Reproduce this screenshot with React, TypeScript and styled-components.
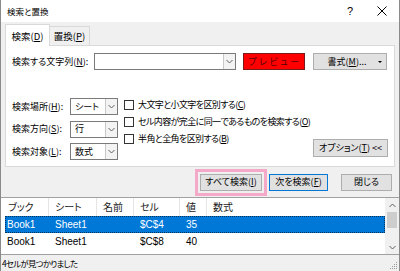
import React from "react";
import styled, { createGlobalStyle } from "styled-components";

const Global = createGlobalStyle`
  html, body { margin: 0; padding: 0; background: #fff; }
  body {
    font-family: "Noto Sans CJK JP", "Noto Sans", sans-serif;
    font-size: 9px;
    font-feature-settings: "palt";
    color: #000;
  }
  * { box-sizing: border-box; }
`;

const Window = styled.div`
  width: 400px;
  height: 271px;
  display: flex;
  flex-direction: column;
  background: #f0f0f0;
  border-left: 1px solid #8a8a8a;
  border-right: 1px solid #8a8a8a;
  overflow: hidden;
`;

const TitleBar = styled.div`
  height: 22px;
  flex: none;
  background: #fff;
  display: flex;
  align-items: center;
  padding-left: 6px;
`;

const Title = styled.span`
  font-size: 8.5px;
  line-height: 12px;
  flex: 1;
`;

const HelpMark = styled.span`
  width: 30px;
  text-align: center;
  font-family: "Liberation Sans", sans-serif;
  font-size: 11px;
  margin-right: 0px;
`;

const CloseBox = styled.span`
  width: 34px;
  height: 22px;
  display: flex;
  align-items: center;
  justify-content: center;
`;

const TabStrip = styled.div`
  height: 23px;
  flex: none;
  display: flex;
  align-items: flex-end;
  padding-left: 4px;
`;

const Tab = styled.div<{ $active?: boolean }>`
  height: ${(p) => (p.$active ? 22 : 19)}px;
  width: ${(p) => (p.$active ? 45 : 40)}px;
  background: ${(p) => (p.$active ? "#fff" : "#f0f0f0")};
  border: 1px solid #d9d9d9;
  border-bottom: none;
  ${(p) => (p.$active ? "" : "border-left: none;")}
  margin-bottom: ${(p) => (p.$active ? -1 : 0)}px;
  position: relative;
  z-index: ${(p) => (p.$active ? 1 : 0)};
  display: flex;
  align-items: center;
  justify-content: center;
  font-size: 9.5px;
  line-height: 12px;
`;

const Panel = styled.div`
  height: 122px;
  flex: none;
  margin: 0 4px;
  background: #fff;
  border: 1px solid #d9d9d9;
  padding: 7px 6px 0 6px;
`;

const FindRow = styled.div`
  display: flex;
  align-items: center;
  height: 17px;
`;

const Label = styled.span<{ $w: number }>`
  width: ${(p) => p.$w}px;
  flex: none;
  white-space: nowrap;
  line-height: 12px;
`;

const Combo = styled.div<{ $w: number }>`
  width: ${(p) => p.$w}px;
  height: 17px;
  flex: none;
  border: 1px solid #7a7a7a;
  background: #fff;
  display: flex;
  align-items: center;
`;

const ComboText = styled.span`
  flex: 1;
  padding-left: 4px;
  line-height: 12px;
  white-space: nowrap;
`;

const ComboArrow = styled.span`
  width: 12px;
  height: 100%;
  border-left: 1px solid #c8c8c8;
  background: #f3f3f3;
  display: flex;
  align-items: center;
  justify-content: center;
`;

const Preview = styled.div`
  width: 62px;
  height: 17px;
  flex: none;
  margin-left: 7px;
  background: #ff0000;
  border: 1px solid #7a1a1a;
  display: flex;
  align-items: center;
  justify-content: center;
  color: #5a0000;
  letter-spacing: 2.5px;
  padding-left: 2px;
  line-height: 12px;
  white-space: nowrap;
  overflow: hidden;
`;

const Button = styled.div<{ $w: number; $default?: boolean }>`
  width: ${(p) => p.$w}px;
  height: 17px;
  flex: none;
  background: #e1e1e1;
  border: 1px solid ${(p) => (p.$default ? "#0078d7" : "#adadad")};
  display: flex;
  align-items: center;
  justify-content: center;
  line-height: 12px;
  white-space: nowrap;
  position: relative;
`;

const FormatButton = styled(Button)`
  margin-left: 8px;
  padding-right: 6px;
`;

const MenuCaret = styled.span`
  position: absolute;
  right: 4px;
  top: 7px;
  width: 0;
  height: 0;
  border-left: 2px solid transparent;
  border-right: 2px solid transparent;
  border-top: 2px solid #000;
`;

const OptionsArea = styled.div`
  display: flex;
  margin-top: 26px;
`;

const ScopeGrid = styled.div`
  display: grid;
  grid-template-columns: 58px 48px;
  grid-auto-rows: 17px;
  row-gap: 5.5px;
  margin-top: 2px;
  align-items: center;
  flex: none;
`;

const CheckCol = styled.div`
  display: flex;
  flex-direction: column;
  margin-left: 6px;
  flex: 1;
  min-width: 0;
`;

const CheckRow = styled.div`
  height: 17px;
  display: flex;
  align-items: center;
  white-space: nowrap;
  line-height: 12px;
  letter-spacing: -0.6px;
`;

const CheckBox = styled.span`
  width: 10px;
  height: 10px;
  border: 1px solid #333;
  background: #fff;
  margin-right: 4px;
  flex: none;
`;

const OptionsButton = styled(Button)`
  height: 18px;
  margin-top: 43px;
`;

const ButtonRow = styled.div`
  height: 30px;
  flex: none;
  display: flex;
  align-items: center;
  justify-content: flex-end;
  padding-right: 7px;
`;

const Highlight = styled.div`
  border: 3px solid #f4a9c9;
  padding: 2px;
  margin-right: 2px;
`;

const Gap = styled.span<{ $w: number }>`
  width: ${(p) => p.$w}px;
  flex: none;
`;

const List = styled.div`
  height: 58px;
  flex: none;
  display: flex;
  background: #fff;
  border-top: 1px solid #a0a0a0;
  border-bottom: 1px solid #a0a0a0;
`;

const ListBody = styled.div`
  flex: 1;
  display: flex;
  flex-direction: column;
`;

const Header = styled.div`
  height: 18px;
  display: grid;
  grid-template-columns: 48px 48px 37px 46px 27px 1fr;
  font-size: 10px;
  color: #1a1a1a;
`;

const HeadCell = styled.div<{ $pad: number }>`
  display: flex;
  align-items: center;
  padding-left: ${(p) => p.$pad}px;
  border-right: 1px solid #e5e5e5;
  line-height: 12px;
  &:last-child { border-right: none; }
`;

const Row = styled.div<{ $sel?: boolean }>`
  height: 17px;
  margin-left: 4px;
  display: grid;
  grid-template-columns: 44px 48px 37px 46px 27px 1fr;
  font-size: 10px;
  background: ${(p) => (p.$sel ? "#0078d7" : "transparent")};
  color: ${(p) => (p.$sel ? "#fff" : "#000")};
  outline: ${(p) => (p.$sel ? "1px dotted rgba(0,0,0,0.55)" : "none")};
  outline-offset: -1px;
`;

const Cell = styled.div<{ $pad: number }>`
  display: flex;
  align-items: center;
  padding-left: ${(p) => p.$pad}px;
  line-height: 12px;
  font-family: "Liberation Sans", "Noto Sans CJK JP", sans-serif;
  white-space: nowrap;
`;

const ScrollBar = styled.div`
  width: 14px;
  flex: none;
  background: #f0f0f0;
  display: flex;
  flex-direction: column;
  align-items: center;
`;

const ScrollArrow = styled.div`
  height: 14px;
  width: 14px;
  display: flex;
  align-items: center;
  justify-content: center;
`;

const Thumb = styled.div`
  width: 10px;
  height: 16px;
  background: #cdcdcd;
`;

const ScrollSpace = styled.div`
  flex: 1;
`;

const StatusBar = styled.div`
  flex: 1;
  display: flex;
  align-items: center;
  padding-left: 1px;
  position: relative;
  line-height: 12px;
  font-size: 8.5px;
  letter-spacing: -0.8px;
`;

const Grip = styled.svg`
  position: absolute;
  right: 1px;
  bottom: 1px;
`;

const Chevron = ({ up }: { up?: boolean }) => (
  <svg width="7" height="5" viewBox="0 0 7 5">
    <polyline
      points={up ? "0.5,4 3.5,1 6.5,4" : "0.5,1 3.5,4 6.5,1"}
      fill="none"
      stroke="#606060"
      strokeWidth="1"
    />
  </svg>
);

const Select = ({ text }: { text: string }) => (
  <Combo $w={48}>
    <ComboText>{text}</ComboText>
    <ComboArrow>
      <Chevron />
    </ComboArrow>
  </Combo>
);

export default function App() {
  return (
    <>
      <Global />
      <Window>
        <TitleBar>
          <Title>検索と置換</Title>
          <HelpMark>?</HelpMark>
          <CloseBox>
            <svg width="10" height="10" viewBox="0 0 10 10">
              <path d="M0.5 0.5 L9.5 9.5 M9.5 0.5 L0.5 9.5" stroke="#000" strokeWidth="1" />
            </svg>
          </CloseBox>
        </TitleBar>
        <TabStrip>
          <Tab $active>
            検索(<u>D</u>)
          </Tab>
          <Tab>
            置換(<u>P</u>)
          </Tab>
        </TabStrip>
        <Panel>
          <FindRow>
            <Label $w={82}>
              検索する文字列(<u>N</u>):
            </Label>
            <Combo $w={142}>
              <ComboText />
              <ComboArrow>
                <Chevron />
              </ComboArrow>
            </Combo>
            <Preview>プレビュー</Preview>
            <FormatButton $w={74}>
              書式(<u>M</u>)...
              <MenuCaret />
            </FormatButton>
          </FindRow>
          <OptionsArea>
            <ScopeGrid>
              <Label $w={58}>
                検索場所(<u>H</u>):
              </Label>
              <Select text="シート" />
              <Label $w={58}>
                検索方向(<u>S</u>):
              </Label>
              <Select text="行" />
              <Label $w={58}>
                検索対象(<u>L</u>):
              </Label>
              <Select text="数式" />
            </ScopeGrid>
            <CheckCol>
              <CheckRow>
                <CheckBox />
                大文字と小文字を区別する(<u>C</u>)
              </CheckRow>
              <CheckRow>
                <CheckBox />
                セル内容が完全に同一であるものを検索する(<u>O</u>)
              </CheckRow>
              <CheckRow>
                <CheckBox />
                半角と全角を区別する(<u>B</u>)
              </CheckRow>
            </CheckCol>
            <OptionsButton $w={75}>
              オプション(<u>T</u>) &lt;&lt;
            </OptionsButton>
          </OptionsArea>
        </Panel>
        <ButtonRow>
          <Highlight>
            <Button $w={62}>
              すべて検索(<u>I</u>)
            </Button>
          </Highlight>
          <Button $w={59} $default>
            次を検索(<u>F</u>)
          </Button>
          <Gap $w={13} />
          <Button $w={51}>閉じる</Button>
        </ButtonRow>
        <List>
          <ListBody>
            <Header>
              <HeadCell $pad={7}>ブック</HeadCell>
              <HeadCell $pad={6}>シート</HeadCell>
              <HeadCell $pad={6}>名前</HeadCell>
              <HeadCell $pad={6}>セル</HeadCell>
              <HeadCell $pad={6}>値</HeadCell>
              <HeadCell $pad={6}>数式</HeadCell>
            </Header>
            <Row $sel>
              <Cell $pad={2}>Book1</Cell>
              <Cell $pad={6}>Sheet1</Cell>
              <Cell $pad={6} />
              <Cell $pad={6}>$C$4</Cell>
              <Cell $pad={6}>35</Cell>
              <Cell $pad={6} />
            </Row>
            <Row>
              <Cell $pad={2}>Book1</Cell>
              <Cell $pad={6}>Sheet1</Cell>
              <Cell $pad={6} />
              <Cell $pad={6}>$C$8</Cell>
              <Cell $pad={6}>40</Cell>
              <Cell $pad={6} />
            </Row>
          </ListBody>
          <ScrollBar>
            <ScrollArrow>
              <Chevron up />
            </ScrollArrow>
            <Thumb />
            <ScrollSpace />
            <ScrollArrow>
              <Chevron />
            </ScrollArrow>
          </ScrollBar>
        </List>
        <StatusBar>
          4セルが見つかりました
          <Grip width="8" height="8" viewBox="0 0 8 8">
            <rect x="6" y="0" width="1" height="1" fill="#999" />
            <rect x="4" y="2" width="1" height="1" fill="#999" />
            <rect x="6" y="2" width="1" height="1" fill="#999" />
            <rect x="2" y="4" width="1" height="1" fill="#999" />
            <rect x="4" y="4" width="1" height="1" fill="#999" />
            <rect x="6" y="4" width="1" height="1" fill="#999" />
            <rect x="0" y="6" width="1" height="1" fill="#999" />
            <rect x="2" y="6" width="1" height="1" fill="#999" />
            <rect x="4" y="6" width="1" height="1" fill="#999" />
            <rect x="6" y="6" width="1" height="1" fill="#999" />
          </Grip>
        </StatusBar>
      </Window>
    </>
  );
}
